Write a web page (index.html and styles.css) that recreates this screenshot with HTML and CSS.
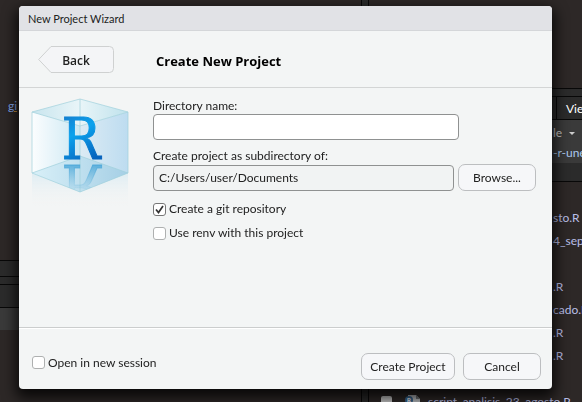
FILE: index.html
```html
<!DOCTYPE html>
<html lang="en">
<head>
<meta charset="utf-8">
<title>New Project Wizard</title>
<link rel="stylesheet" href="styles.css">
</head>
<body>
<div class="workspace">
  <section class="editor">
    <div class="source"><span class="code">gi</span></div>
    <div class="strip strip-status"></div>
    <div class="strip strip-gap"></div>
    <div class="strip strip-tabs"></div>
    <div class="strip strip-tools"></div>
    <div class="console"></div>
  </section>
  <div class="splitter"></div>
  <section class="files">
    <div class="plots"></div>
    <div class="gap"></div>
    <div class="tabs"><span class="tab">Vie</span></div>
    <div class="tools">
      <div class="tool-row"><span>le</span><span class="caret"></span><span class="field"></span></div>
      <div class="tool-row path">-r-une</div>
    </div>
    <div class="columns"></div>
    <ul class="list">
      <li></li>
      <li>sto.R</li>
      <li>4_sept</li>
      <li></li>
      <li>.R</li>
      <li>cado.R</li>
      <li>.R</li>
      <li>.R</li>
      <li></li>
      <li class="full">
        <span class="box"></span>
        <svg class="doc" viewBox="0 0 16 16" aria-hidden="true">
          <path d="M3 1h8l4 4v11H3z" fill="#b9bcbf"/>
          <path d="M11 1v4h4z" fill="#6d7073"/>
          <circle cx="4" cy="6" r="4" fill="#39658e"/>
          <text x="4" y="8" class="doc-letter">R</text>
        </svg>
        <span>script_analisis_23_agosto.R</span>
      </li>
    </ul>
  </section>
</div>

<form class="dialog" role="dialog" aria-labelledby="caption">
  <div class="caption" id="caption">New Project Wizard</div>
  <header class="head">
    <button type="button" class="back">
      <svg class="back-shape" viewBox="0 0 76 27" aria-hidden="true">
        <path d="M13 .5H71.500a4 4 0 0 1 4 4v18a4 4 0 0 1-4 4H13L.7 13.500z"/>
      </svg>
      <span class="back-label">Back</span>
    </button>
    <h1>Create New Project</h1>
  </header>
  <main class="body">
    <svg class="logo" viewBox="0 0 98 112" role="img" aria-label="R project">
      <defs>
        <linearGradient id="left" x1="0" y1="0" x2="1" y2="0">
          <stop offset="0" stop-color="#fbfdfe"/><stop offset="1" stop-color="#cce8f3"/>
        </linearGradient>
        <linearGradient id="right" x1="0" y1="0" x2="1" y2="0">
          <stop offset="0" stop-color="#dcebf4"/><stop offset="1" stop-color="#bddcf0"/>
        </linearGradient>
        <linearGradient id="top" x1="0" y1="0" x2="1" y2="0">
          <stop offset="0" stop-color="#c8e5ee"/><stop offset=".5" stop-color="#e9f5f8"/><stop offset="1" stop-color="#bfe2ec"/>
        </linearGradient>
        <linearGradient id="floor" x1="0" y1="0" x2="1" y2="0">
          <stop offset="0" stop-color="#d9f0f8"/><stop offset="1" stop-color="#a5cfe5"/>
        </linearGradient>
        <linearGradient id="letter" gradientUnits="userSpaceOnUse" x1="34" y1="18" x2="60" y2="62">
          <stop offset="0" stop-color="#1580d0"/><stop offset=".4" stop-color="#0ba2ed"/><stop offset="1" stop-color="#0663bd"/>
        </linearGradient>
        <linearGradient id="mirror" gradientUnits="userSpaceOnUse" x1="0" y1="0" x2="0" y2="-26">
          <stop offset="0" stop-color="#46a5d8" stop-opacity=".8"/><stop offset="1" stop-color="#7dbfdf" stop-opacity=".1"/>
        </linearGradient>
        <linearGradient id="fade" gradientUnits="userSpaceOnUse" x1="0" y1="74" x2="0" y2="108">
          <stop offset="0" stop-color="#d7eaf2" stop-opacity=".8"/><stop offset="1" stop-color="#f3f5f5" stop-opacity="0"/>
        </linearGradient>
        <clipPath id="base"><path d="M49 58 97 75 49 94 1 75z"/></clipPath>
      </defs>
      <path d="M1 75 49 94 97 75V108H1z" fill="url(#fade)"/>
      <path d="M1 14 49 28V94L1 75z" fill="url(#left)"/>
      <path d="M97 14 49 28V94L97 75z" fill="url(#right)"/>
      <path d="M49 1 97 14 49 28 1 14z" fill="url(#top)"/>
      <path d="M49 58 97 75 49 94 1 75z" fill="url(#floor)"/>
      <path class="edge" d="M1 14 49 1l48 13v61L49 94 1 75zM1 14l48 14 48-14M49 1v27M49 28v66M1 75l48-17 48 17"/>
      <g clip-path="url(#base)"><text class="letter mirror" x="50" y="0" transform="translate(0 67) scale(1 -1)">R</text></g>
      <text class="letter" x="50" y="61">R</text>
    </svg>
    <div class="fields">
      <label for="name">Directory name:</label>
      <input class="text" id="name" type="text">
      <label for="parent" class="second">Create project as subdirectory of:</label>
      <div class="chooser">
        <input class="text readonly" id="parent" type="text" value="C:/Users/user/Documents" readonly>
        <button type="button" class="btn browse">Browse...</button>
      </div>
      <label class="check first"><input type="checkbox" checked>Create a git repository</label>
      <label class="check"><input type="checkbox">Use renv with this project</label>
    </div>
  </main>
  <footer class="foot">
    <label class="check"><input type="checkbox">Open in new session</label>
    <button type="submit" class="btn create">Create Project</button>
    <button type="button" class="btn cancel">Cancel</button>
  </footer>
</form>
</body>
</html>
```
FILE: styles.css
```css
* { box-sizing: border-box; }

body {
  margin: 0;
  font: 12px/16px Lato, "Open Sans", sans-serif;
  color: #222;
  background: #2d2827;
  overflow: hidden;
}

button, input { font: inherit; color: inherit; margin: 0; }

/* Workspace behind the dialog */
.workspace {
  display: grid;
  grid-template-columns: 361fr 8px 213fr;
  height: 100vh;
  overflow: hidden;
  color: #b9bfe8;
  white-space: nowrap;
}

.editor { display: flex; flex-direction: column; }
.source { height: 260px; padding: 98px 0 0 8px; }
.code { color: #86a9ee; text-decoration: underline #c98f3c; }
.strip { background: #2b2b2b; border-top: 1px solid #080808; }
.strip-status { height: 16px; }
.strip-gap { height: 8px; }
.strip-tabs { height: 23px; }
.strip-tools { height: 23px; background: #3a3a3a; }
.console { flex: 1; }

.splitter { background: #2b2b2b; border: solid #080808; border-width: 0 1px; }

.files { min-width: 0; overflow: hidden; }
.plots { height: 88px; background: #2d2827; }
.gap { height: 8px; background: #2b2b2b; border-top: 1px solid #080808; }
.tabs {
  display: flex;
  height: 24px;
  padding-left: 187px;
  background: #2b2b2b;
  border: solid #080808;
  border-width: 1px 0;
}
.tab { padding: 4px 0 0 9px; border-left: 1px solid #080808; color: #fff; }
.tools { height: 43px; padding-top: 3px; background: #3a3a3a; }
.tool-row {
  display: flex;
  align-items: center;
  height: 20px;
  padding-left: 184px;
  color: #c9c9c9;
}
.tool-row.path { color: #a9c8ee; }
.caret {
  margin: 0 8px 0 7px;
  border: 3px solid transparent;
  border-top-color: #ccc;
  border-bottom: 0;
}
.field { flex: 1; height: 16px; background: #050505; }
.columns { height: 19px; background: #2b2b2b; border-bottom: 1px solid #080808; }

.list { margin: 0; padding: 1px 0 0; list-style: none; }
.list li {
  display: flex;
  align-items: center;
  height: 23px;
  padding-left: 184px;
}
.list li.full { padding-left: 12px; }
.box { width: 11px; height: 11px; border-radius: 2px; background: #c8c8c8; }
.doc { width: 16px; height: 16px; margin: 0 7px 0 13px; }
.doc-letter { font-size: 6px; font-weight: 700; text-anchor: middle; fill: #fff; }

/* Dialog */
.dialog {
  position: fixed;
  inset: 6px 30px 13px 19px;
  display: flex;
  flex-direction: column;
  border-radius: 4px;
  background: #f3f5f5;
  box-shadow: 0 6px 14px 3px #000c;
  overflow: hidden;
}

.caption {
  padding: 5px 9px 3px;
  font-size: 11px;
  background: #e1e2e6;
  border-bottom: 1px solid #d4d6d9;
}

.head {
  display: flex;
  align-items: center;
  gap: 42px;
  height: 57px;
  padding: 0 19px;
  border-bottom: 1px solid #d3d5d5;
}
.head h1 { margin: 4px 0 0; font: 700 13px/18px "Open Sans", sans-serif; color: #000; }

.back {
  display: grid;
  width: 76px;
  height: 27px;
  padding: 0;
  border: 0;
  background: none;
  font: 600 12px/16px "Open Sans", sans-serif;
}
.back > * { grid-area: 1 / 1; }
.back-shape { width: 76px; height: 27px; fill: #f4f5f7; stroke: #cfd1d1; }
.back-label { align-self: center; padding-top: 4px; }

.body { display: flex; flex: 1; gap: 24px; padding: 10px 16px 0 12px; }
.logo { flex: none; width: 98px; height: 112px; }
.edge { fill: none; stroke: #9fd0dc; stroke-opacity: .7; }
.letter {
  font: 57px "DejaVu Serif Condensed", "DejaVu Serif", serif;
  text-anchor: middle;
  fill: url(#letter);
  stroke: url(#letter);
  stroke-width: 1;
}
.letter.mirror { fill: url(#mirror); stroke: url(#mirror); }

.fields { display: flex; flex: 1; flex-direction: column; align-items: flex-start; }
.text {
  width: calc(100% - 77px);
  height: 26px;
  padding: 0 5px;
  border: 1px solid #8f9191;
  border-radius: 4px;
  background: #fff;
}
.text.readonly { flex: 1; width: auto; min-width: 0; background: #f1f3f3; }
.second { margin-top: 8px; }
.chooser { display: flex; align-items: center; align-self: stretch; gap: 4px; }

.btn {
  height: 27px;
  padding: 0;
  border: 1px solid #bcbec0;
  border-radius: 7px;
  background: #f6f7f9;
}
.browse { width: 78px; }
.create { width: 94px; }
.cancel { width: 78px; }

.check { display: flex; align-items: center; gap: 3px; margin-top: 8px; }
.check.first { margin-top: 10px; }
.check input {
  appearance: none;
  width: 13px;
  height: 13px;
  border: 1px solid #aeb0b0;
  border-radius: 3px;
  background: #fff;
}
.check input:checked {
  border-color: #777;
  background: #fff url("data:image/svg+xml,%3Csvg xmlns='http://www.w3.org/2000/svg' viewBox='0 0 11 11'%3E%3Cpath d='M2 5.500 4.500 8.500 9 2' fill='none' stroke='%23333' stroke-width='1.700'/%3E%3C/svg%3E");
}

.foot {
  display: flex;
  align-items: center;
  gap: 8px;
  height: 62px;
  padding: 16px 11px 0 13px;
  border-top: 1px solid #cbcdcd;
  box-shadow: inset 0 1px #fff;
}
.foot .check { margin: -8px auto 0 0; }
```
